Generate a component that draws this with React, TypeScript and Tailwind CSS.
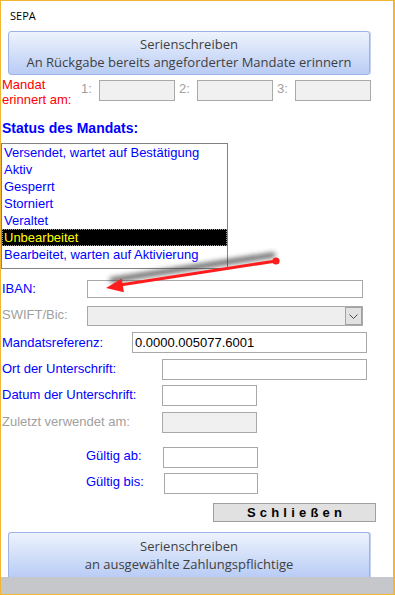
import React from "react";

const lab = "font-['Liberation_Sans',Arial,sans-serif] text-[13px] leading-[15px]";
const blue = "text-[#0000ff]";
const gray = "text-[#a0a0a0]";
const inp = "border border-[#a9a9a9] bg-white";
const inpDis = "border border-[#a9a9a9] bg-[#f0f0f0]";

function Btn({ l1, l2, className }: { l1: string; l2: string; className: string }) {
  return (
    <div
      className={
        "ml-[7px] w-[362px] border border-[#9db3e6] bg-linear-to-b from-[#eef3fc] to-[#b9ccf5] shadow-[1px_0_0_#c3d2f2] flex flex-col items-center font-['Open_Sans',sans-serif] text-[13px] leading-[18px] text-[#3f3f3f] " +
        className
      }
    >
      <div>{l1}</div>
      <div>{l2}</div>
    </div>
  );
}

const items = [
  "Versendet, wartet auf Bestätigung",
  "Aktiv",
  "Gesperrt",
  "Storniert",
  "Veraltet",
  "Unbearbeitet",
  "Bearbeitet, warten auf Aktivierung",
];

export default function App() {
  return (
    <div className="relative w-[395px] h-[595px] overflow-hidden bg-white">
      <div className="flex flex-col w-[395px] h-[595px] border-t border-l border-b border-r-2 border-[#f2b632] bg-white">
        <div className="mt-[7px] pl-[9px] font-['Open_Sans',sans-serif] text-[11px] leading-[15px] text-black">
          SEPA
        </div>
        <Btn
          className="mt-[8px] h-[44px] rounded-[3px] justify-center"
          l1="Serienschreiben"
          l2="An Rückgabe bereits angeforderter Mandate erinnern"
        />

        {/* Mandat erinnert am */}
        <div className={"mt-[2px] ml-[1px] flex items-start " + lab}>
          <div className="w-[79px] text-[#ff0000]">
            Mandat
            <br />
            erinnert am:
          </div>
          <div className={"w-[18px] mt-[4px] " + gray}>1:</div>
          <div className={"mt-[3px] w-[76px] h-[21px] " + inpDis}></div>
          <div className={"w-[22px] pl-[4px] mt-[4px] " + gray}>2:</div>
          <div className={"mt-[3px] w-[76px] h-[21px] " + inpDis}></div>
          <div className={"w-[22px] pl-[4px] mt-[4px] " + gray}>3:</div>
          <div className={"mt-[3px] w-[76px] h-[21px] " + inpDis}></div>
        </div>

        <div className="mt-[13px] ml-[1px] font-['Liberation_Sans',Arial,sans-serif] text-[14px] leading-[16px] font-bold text-[#0000ff]">
          Status des Mandats:
        </div>

        {/* List */}
        <div className="mt-[7px] w-[227px] h-[126px] border border-[#828282] font-['Liberation_Sans',Arial,sans-serif] text-[13px] leading-[17px]">
          {items.map((t) =>
            t === "Unbearbeitet" ? (
              <div
                key={t}
                className="h-[17px] pl-[2px] bg-black text-[#ffff00] outline outline-1 outline-dotted outline-offset-[-1px] outline-[#9a9a9a] whitespace-nowrap"
              >
                {t}
              </div>
            ) : (
              <div key={t} className="h-[17px] pl-[2px] text-[#0000ff] whitespace-nowrap">
                {t}
              </div>
            )
          )}
        </div>

        {/* IBAN */}
        <div className={"mt-[11px] ml-[1px] flex items-start " + lab}>
          <div className={"w-[85px] mt-[1px] " + blue}>IBAN:</div>
          <div className={"w-[276px] h-[18px] " + inp}></div>
        </div>

        {/* SWIFT */}
        <div className={"mt-[8px] ml-[1px] flex items-start " + lab}>
          <div className={"w-[85px] mt-[1px] " + gray}>SWIFT/Bic:</div>
          <div className="w-[276px] h-[20px] border border-[#a9a9a9] bg-[#eeeeee] flex justify-end">
            <div className="w-[17px] h-full border border-[#a3a3a3] bg-[#e2e2e2] flex items-center justify-center">
              <svg width="9" height="5" viewBox="0 0 9 5">
                <polyline points="0.5,0.5 4.5,4.5 8.5,0.5" fill="none" stroke="#4a4a4a" strokeWidth="1" />
              </svg>
            </div>
          </div>
        </div>

        {/* Mandatsreferenz */}
        <div className={"mt-[6px] ml-[1px] flex items-start " + lab}>
          <div className={"w-[130px] mt-[3px] " + blue}>Mandatsreferenz:</div>
          <div className={"w-[235px] h-[21px] pl-[2px] text-black leading-[19px] " + inp}>0.0000.005077.6001</div>
        </div>

        {/* Ort */}
        <div className={"mt-[6px] ml-[1px] flex items-start " + lab}>
          <div className={"w-[160px] mt-[2px] " + blue}>Ort der Unterschrift:</div>
          <div className={"w-[205px] h-[21px] " + inp}></div>
        </div>

        {/* Datum */}
        <div className={"mt-[5px] ml-[1px] flex items-start " + lab}>
          <div className={"w-[160px] mt-[2px] " + blue}>Datum der Unterschrift:</div>
          <div className={"w-[95px] h-[21px] " + inp}></div>
        </div>

        {/* Zuletzt */}
        <div className={"mt-[6px] ml-[1px] flex items-start " + lab}>
          <div className={"w-[160px] mt-[2px] " + gray}>Zuletzt verwendet am:</div>
          <div className={"w-[95px] h-[21px] " + inpDis}></div>
        </div>

        {/* Gültig ab */}
        <div className={"mt-[14px] ml-[85px] flex items-start " + lab}>
          <div className={"w-[77px] mt-[1px] " + blue}>Gültig ab:</div>
          <div className={"w-[95px] h-[21px] " + inp}></div>
        </div>

        {/* Gültig bis */}
        <div className={"mt-[5px] ml-[85px] flex items-start " + lab}>
          <div className={"w-[78px] mt-[1px] " + blue}>Gültig bis:</div>
          <div className={"w-[94px] h-[21px] " + inp}></div>
        </div>

        {/* Schließen */}
        <div className="mt-[9px] ml-[212px] w-[163px] h-[19px] border border-[#a0a0a0] bg-[#e1e1e1] flex items-center justify-center pl-[4px] font-['Liberation_Sans',Arial,sans-serif] text-[13px] font-bold tracking-[4.2px] text-black leading-[15px]">
          Schließen
        </div>

        <Btn
          className="mt-[10px] h-[45px] rounded-t-[3px] border-b-0 pt-[4px]"
          l1="Serienschreiben"
          l2="an ausgewählte Zahlungspflichtige"
        />

        <div className="h-[17px] bg-[#c6c7cb]"></div>
      </div>

      {/* Annotation arrow */}
      <svg className="absolute left-0 top-0 pointer-events-none" width={395} height={595}>
        <defs>
          <filter id="shadowblur" x="-20%" y="-100%" width="140%" height="300%">
            <feGaussianBlur stdDeviation="2.4" />
          </filter>
        </defs>
        <g filter="url(#shadowblur)" opacity="0.8">
          <line x1={273} y1={255} x2={112} y2={280} stroke="#3a3a3a" strokeWidth={5} strokeLinecap="round" />
        </g>
        <line x1={276} y1={261} x2={120} y2={285} stroke="#ff1c1c" strokeWidth={3} />
        <polygon points="106,288 121.7,278.4 123.9,292.2" fill="#ff1c1c" />
        <circle cx={276} cy={261} r={3.6} fill="#ff1c1c" />
      </svg>
    </div>
  );
}
